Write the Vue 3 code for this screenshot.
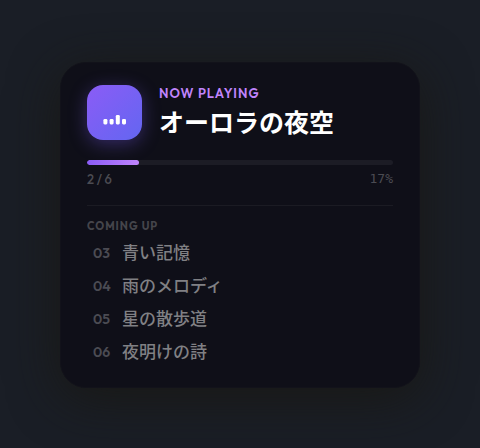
<script setup>
import { computed } from "vue";

const current = { index: 2, title: "オーロラの夜空" };
const total = 6;
const queue = [
  { no: "03", title: "青い記憶" },
  { no: "04", title: "雨のメロディ" },
  { no: "05", title: "星の散歩道" },
  { no: "06", title: "夜明けの詩" },
];
const percent = computed(() => Math.round(((current.index - 1) / total) * 100));
</script>

<template>
  <main class="page">
    <section class="card">
      <header class="head">
        <div class="cover">
          <svg width="24" height="12" viewBox="0 0 24 12" fill="#fff" aria-hidden="true">
            <rect x="0.4" y="5" width="4" height="5.4" rx="1.3" />
            <rect x="6.6" y="5" width="4" height="5.4" rx="1.3" />
            <rect x="12.8" y="1" width="4" height="9.4" rx="1.3" />
            <rect x="19" y="5" width="4" height="5.4" rx="1.3" />
          </svg>
        </div>
        <div class="info">
          <div class="label">NOW PLAYING</div>
          <h1 class="title">{{ current.title }}</h1>
        </div>
      </header>

      <div class="bar">
        <div class="fill" :style="{ width: percent + '%' }"></div>
      </div>
      <div class="meta">
        <span>{{ current.index }} / {{ total }}</span>
        <span class="pct">{{ percent }}%</span>
      </div>

      <div class="next">
        <h2 class="sub">COMING UP</h2>
        <ol class="list">
          <li v-for="track in queue" :key="track.no" class="row">
            <span class="no">{{ track.no }}</span>
            <span class="name">{{ track.title }}</span>
          </li>
        </ol>
      </div>
    </section>
  </main>
</template>

<style>
body {
  background: #1a1e26;
}
</style>

<style scoped>
.page {
  min-height: 100vh;
  box-sizing: border-box;
  padding: 62px 60px 60px;
  font-family: Outfit, Lato, "Noto Sans CJK JP", sans-serif;
}
.card {
  box-sizing: border-box;
  padding: 22px 26px 19px;
  border: 1px solid #12121a;
  border-radius: 26px;
  background: #0f0f18;
  box-shadow: 0 10px 50px rgba(25, 23, 18, 0.85);
}
.head {
  display: flex;
  align-items: center;
  gap: 17px;
}
.cover {
  box-sizing: border-box;
  display: flex;
  flex: none;
  align-items: flex-end;
  justify-content: center;
  width: 55px;
  height: 55px;
  padding-bottom: 14px;
  border-radius: 16px;
  background: linear-gradient(135deg, #8b5cf6, #6366f1);
  box-shadow: 0 4px 18px rgba(124, 92, 246, 0.35);
}
.label {
  color: #c084fc;
  font-size: 13px;
  font-weight: 600;
  line-height: 16px;
  letter-spacing: 1px;
}
.title {
  margin: 0;
  padding-top: 5px;
  color: #fff;
  font-size: 25px;
  font-weight: 700;
  line-height: 34px;
  white-space: nowrap;
}
.bar {
  height: 5px;
  margin-top: 20px;
  border-radius: 3px;
  background: #1c1c25;
  overflow: hidden;
}
.fill {
  height: 100%;
  border-radius: 3px;
  background: linear-gradient(90deg, #8b5cf6, #c084fc);
}
.meta {
  display: flex;
  justify-content: space-between;
  margin-top: 5px;
  color: #4b4b52;
  font-size: 13px;
  font-weight: 500;
  line-height: 18px;
}
.pct {
  font-family: "DejaVu Sans Mono", monospace;
}
.next {
  margin-top: 17px;
  padding-top: 12px;
  border-top: 1px solid #1b1b23;
}
.sub {
  margin: 0;
  color: #45454b;
  font-size: 11px;
  font-weight: 700;
  line-height: 16px;
  letter-spacing: 1px;
}
.list {
  margin: 2px 0 0;
  padding: 0;
  list-style: none;
}
.row {
  display: flex;
  align-items: center;
  gap: 12px;
  height: 33px;
  padding-left: 6px;
}
.no {
  width: 17px;
  color: #4b4b53;
  font-size: 14px;
  font-weight: 600;
}
.name {
  color: #808084;
  font-size: 17px;
  font-weight: 500;
  line-height: 25px;
}
</style>
